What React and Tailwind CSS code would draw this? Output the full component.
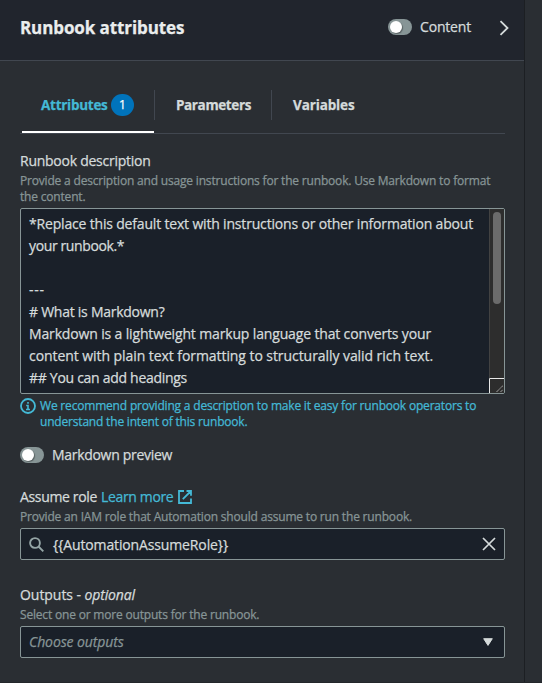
function Toggle() {
  return (
    <span className="flex h-4 w-6 shrink-0 items-center rounded-full bg-[#879596] pl-[2px]">
      <span className="h-3 w-3 rounded-full bg-white shadow-[1px_1px_1px_rgba(0,0,0,0.35)]" />
    </span>
  );
}

function Label({ children }) {
  return <div className="flex h-[22px] items-center whitespace-pre text-[14px] leading-[22px]">{children}</div>;
}

function Hint({ children }) {
  return <div className="-mb-px whitespace-pre pt-px text-[12px] leading-4 tracking-[-0.185px] text-[#879596]">{children}</div>;
}

function Header() {
  return (
    <header className="flex h-[61px] shrink-0 items-start border-b border-[#414750] bg-[#21252d] pl-5 pr-[15px]">
      <h2 className="mt-4 text-[17px] font-bold leading-6 tracking-[-0.1px] text-[#eaeded]">Runbook attributes</h2>
      <div className="ml-auto mt-4 flex h-[22px] items-center gap-2">
        <Toggle />
        <span className="text-[14px] leading-[22px] tracking-[-0.18px]">Content</span>
      </div>
      <svg className="-mr-px ml-[28px] mt-5 h-4 w-[11px]" viewBox="0 0 11 16" fill="none" stroke="#d5dbdb" strokeWidth="1.8">
        <path d="M1.5 1.2 8.5 8l-7 6.8" />
      </svg>
    </header>
  );
}

function Tabs() {
  return (
    <div className="flex h-[44px] border-b border-[#414750] text-[13.5px] font-bold leading-[30px]">
      <div className="ml-[2px] flex h-[43px] w-[132px] items-start border-b-2 border-white pl-[19px] text-[#44b9d6]">
        <span className="w-[70px] tracking-[-0.27px]">Attributes</span>
        <span className="mt-1 flex h-[22px] w-[23px] items-center justify-center rounded-full bg-[#0073bb] text-[12px] font-medium text-white">1</span>
      </div>
      <div className="h-[30px] w-[118px] border-x border-[#414750] pl-[21px] tracking-[-0.38px]">Parameters</div>
      <div className="pl-[21px] tracking-[-0.13px]">Variables</div>
    </div>
  );
}

function DescriptionArea() {
  return (
    <div className="mt-1 flex h-[186px] rounded-[2px] border border-[#879596] bg-[#1a2029]">
      <div className="flex-1 whitespace-pre pl-2 pt-1 text-[14px] leading-[22px]">
        <p className="tracking-[-0.178px]">*Replace this default text with instructions or other information about</p>
        <p className="tracking-[-0.38px]">your runbook.*</p>
        <p>&nbsp;</p>
        <p className="tracking-[0.7px]">---</p>
        <p className="tracking-[-0.256px]"># What is Markdown?</p>
        <p className="tracking-[-0.149px]">Markdown is a lightweight markup language that converts your</p>
        <p className="tracking-[-0.065px]">content with plain text formatting to structurally valid rich text.</p>
        <p className="tracking-[-0.289px]">## You can add headings</p>
      </div>
      <div className="flex w-[15px] flex-col justify-between bg-[#2d2d2d]">
        <div className="flex flex-1 border-l border-[#424242] pl-[3px] pt-[3px]">
          <div className="h-[92px] w-2 rounded-full bg-[#6b6b6b]" />
        </div>
        <svg className="h-[15px] w-[15px]" viewBox="0 0 15 15" fill="none">
          <path d="M.5 15V.5H15" stroke="#e8e8e8" />
          <path d="M7.5 14 14 7.5M11.5 14 14 11.5" stroke="#bdbdbd" strokeDasharray="1.2 .5" />
        </svg>
      </div>
    </div>
  );
}

export default function App() {
  return (
    <div className="flex h-[683px] w-[542px] border-b border-[#24272b] bg-[#2a2e33] font-['Open_Sans','Noto_Sans',sans-serif] font-medium text-[#d5dbdb] [-webkit-text-stroke:0.25px]">
      <aside className="flex w-[525px] shrink-0 flex-col border-r border-[#1c1f23]">
        <Header />
        <main className="flex flex-col pl-5 pr-[19px] pt-[29px]">
          <Tabs />
          <section className="mt-4">
            <Label><span className="tracking-[-0.256px]">Runbook description</span></Label>
            <Hint>{"Provide a description and usage instructions for the runbook. Use Markdown to format\nthe content."}</Hint>
            <DescriptionArea />
            <div className="mt-1 flex gap-1 text-[#44b9d6]">
              <svg className="h-4 w-4 shrink-0" viewBox="0 0 16 16" fill="none" stroke="currentColor">
                <circle cx="8" cy="8" r="7" strokeWidth="1.8" />
                <path d="M8 4v1.8M6.2 7.5H8v4M6 11.5h4" strokeWidth="1.6" />
              </svg>
              <p className="whitespace-pre text-[12px] leading-4 tracking-[-0.188px]">
                {"We recommend providing a description to make it easy for runbook operators to\nunderstand the intent of this runbook."}
              </p>
            </div>
          </section>
          <div className="mt-[14px] flex h-[22px] items-center gap-2">
            <Toggle />
            <span className="text-[14px] leading-[22px] tracking-[-0.306px]">Markdown preview</span>
          </div>
          <section className="mt-5">
            <Label>
              <span className="tracking-[-0.344px]">Assume role</span>
              <span className="ml-[4px] tracking-[-0.35px] text-[#44b9d6]">Learn more</span>
              <svg className="ml-[5px] h-[14px] w-[14px] text-[#44b9d6]" viewBox="0 0 14 14" fill="none" stroke="currentColor" strokeWidth="1.8">
                <path d="M6 1H1v12h12V8.5M8.5 1H13v4.8M13 1 4.8 9.2" />
              </svg>
            </Label>
            <Hint>Provide an IAM role that Automation should assume to run the runbook.</Hint>
            <div className="mt-1 flex h-8 items-center rounded-[2px] border border-[#879596] bg-[#1a2029] pl-2 pr-[8px]">
              <svg className="h-[15px] w-[15px]" viewBox="0 0 15 15" fill="none" stroke="#95a5a6" strokeWidth="1.9">
                <circle cx="6" cy="6" r="4.9" />
                <path d="m9.5 9.5 4.8 4.8" />
              </svg>
              <span className="ml-[9px] mt-px text-[14px] leading-[22px] tracking-[-0.133px]">{"{{AutomationAssumeRole}}"}</span>
              <svg className="ml-auto h-[14px] w-[14px]" viewBox="0 0 14 14" fill="none" stroke="#d5dbdb" strokeWidth="1.7">
                <path d="m1 1 12 12M13 1 1 13" />
              </svg>
            </div>
          </section>
          <section className="mt-6">
            <Label>
              <span className="tracking-[-0.047px]">Outputs - </span>
              <em className="tracking-[-0.15px]">optional</em>
            </Label>
            <Hint>Select one or more outputs for the runbook.</Hint>
            <div className="mt-1 flex h-8 items-center rounded-[2px] border border-[#879596] bg-[#1a2029] pl-2 pr-[11px]">
              <em className="text-[14px] font-normal leading-[22px] tracking-[-0.1px] text-[#879596]">Choose outputs</em>
              <svg className="ml-auto h-2 w-[10px]" viewBox="0 0 10 8" fill="#d5dbdb" stroke="#d5dbdb" strokeLinejoin="round">
                <path d="M.7.7h8.6L5 7.4Z" />
              </svg>
            </div>
          </section>
        </main>
      </aside>
    </div>
  );
}
